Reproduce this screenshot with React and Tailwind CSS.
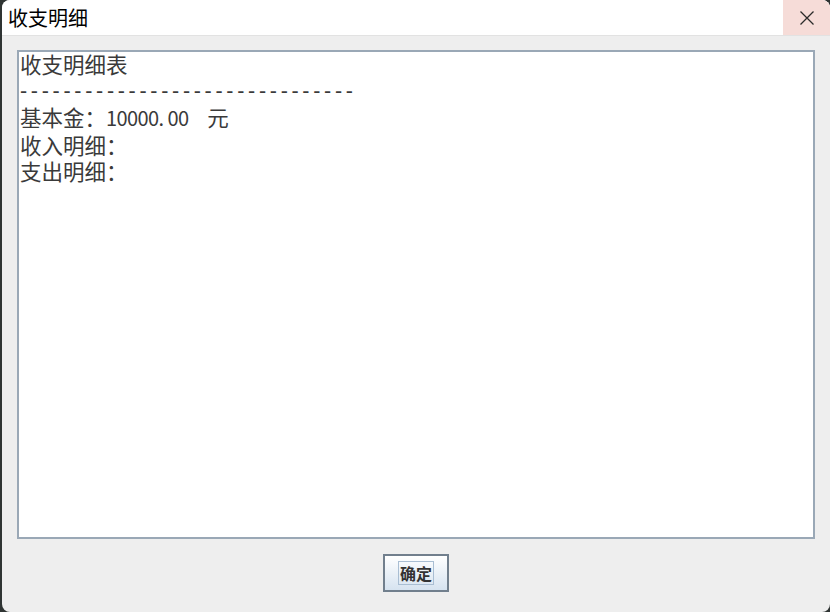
export default function App() {
  const cjk = { fontFamily: '"Noto Sans CJK SC", "Noto Sans", sans-serif' };
  return (
    <div className="w-[830px] h-[612px] bg-[#2f3433] flex pl-[2px]" style={cjk}>
      <div className="flex-1 flex flex-col bg-[#eeeeee] rounded-t-[8px] rounded-b-[8px] overflow-hidden">
        <div className="h-[36px] bg-white flex items-stretch border-b border-[#e2e2e2]">
          <div className="flex-1 flex items-center pl-[6px] text-[20px] text-black leading-none">收支明细</div>
          <div className="w-[47px] bg-[#f6dcd8] flex items-center justify-center">
            <svg width="16" height="16" viewBox="0 0 16 16">
              <path d="M1.5 1.5 L14.5 14.5 M14.5 1.5 L1.5 14.5" stroke="#2b2b2b" strokeWidth="1.3" fill="none" />
            </svg>
          </div>
        </div>
        <div className="flex-1 flex flex-col px-[15px] pt-[14px] pb-[18px]">
          <div className="h-[489px] border-2 border-[#9aa8b6] bg-white pl-[1px] text-[21.5px] leading-[26.5px] text-[#3a3a3a]">
            <div className="-mt-[1px]">收支明细表</div>
            <div className="tracking-[3.7px]" style={{ fontFamily: '"Liberation Sans", sans-serif' }}>-------------------------------</div>
            <div>基本金：<span className="text-[20px] tracking-[-0.6px]">10000.<span className="ml-[4px]">00</span></span> <span className="ml-[14px]">元</span></div>
            <div>收入明细：</div>
            <div>支出明细：</div>
          </div>
          <div className="flex justify-center mt-[15px]">
            <div className="w-[66px] h-[38px] border-2 border-[#717f8d] bg-gradient-to-b from-[#ffffff] to-[#d6e3f0] flex items-center justify-center">
              <div className="px-[1px] border border-[#a9bed3] text-[16px] leading-[22px] font-bold text-[#333333]">确定</div>
            </div>
          </div>
        </div>
      </div>
    </div>
  );
}
